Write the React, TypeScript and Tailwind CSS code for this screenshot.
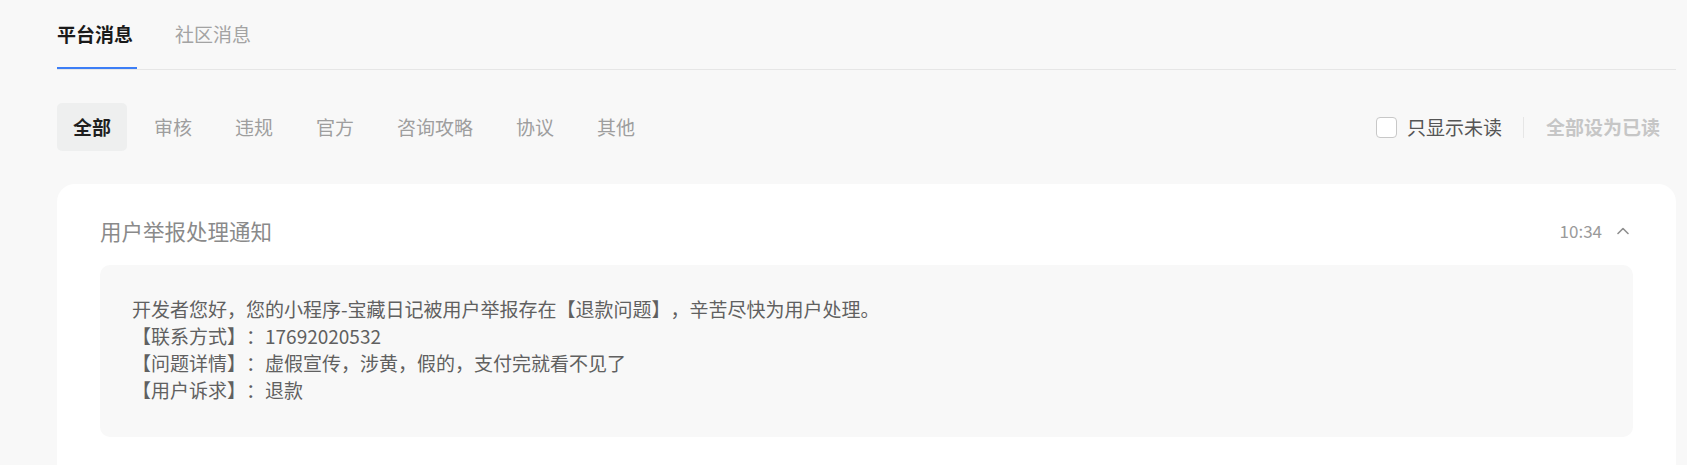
import React from "react";

const FONT = { fontFamily: '"Noto Sans CJK SC", "Noto Sans", sans-serif' };

export default function App() {
  const subTabs = ["全部", "审核", "违规", "官方", "咨询攻略", "协议", "其他"];
  return (
    <div
      className="min-h-screen bg-[#f8f8f8] pl-[57px] pr-[11px] pb-[40px] [text-spacing-trim:space-all]"
      style={FONT}
    >
      {/* top tabs */}
      <div className="flex border-b border-[#e6e6e6]">
        <div className="relative flex h-[69px] w-[80px] items-center text-[19px] font-bold text-[#1a1a1a]">
          平台消息
          <div className="absolute bottom-0 left-0 h-[2px] w-full bg-[#3d7ef6]" />
        </div>
        <div className="ml-[38px] flex h-[69px] items-center text-[19px] text-[#a3a3a3]">
          社区消息
        </div>
      </div>

      {/* sub tabs */}
      <div className="mt-[33px] flex items-center justify-between">
        <div className="flex items-center gap-[11px]">
          {subTabs.map((t, i) => (
            <div
              key={t}
              className={
                i === 0
                  ? "flex h-[48px] items-center rounded-[5px] bg-[#eeefef] px-[16px] text-[19px] font-bold text-[#1f1f1f]"
                  : "flex h-[48px] items-center px-[16px] text-[19px] text-[#9e9e9e]"
              }
            >
              {t}
            </div>
          ))}
        </div>
        <div className="flex items-center pr-[16px]">
          <div className="h-[21px] w-[21px] rounded-[4px] border border-[#c8c8c8] bg-white" />
          <span className="ml-[10px] text-[19px] text-[#555555]">只显示未读</span>
          <div className="ml-[21px] h-[21px] w-px bg-[#e6e6e6]" />
          <span className="ml-[22px] text-[19px] font-bold text-[#c6c6c6]">全部设为已读</span>
        </div>
      </div>

      {/* card */}
      <div className="mt-[33px] rounded-[18px] bg-white px-[43px] pt-[32px] pb-[60px]">
        <div className="flex h-[30px] items-center justify-between">
          <div className="text-[21.5px] text-[#8a8a8a]">用户举报处理通知</div>
          <div className="flex items-center">
            <span className="text-[17px] text-[#9a9a9a]">10:34</span>
            <svg
              className="ml-[15px] mr-[4px]"
              width="12"
              height="8"
              viewBox="0 0 12 8"
              fill="none"
            >
              <path
                d="M1 6.5L6 1.5L11 6.5"
                stroke="#8f8f8f"
                strokeWidth="1.6"
                strokeLinecap="round"
                strokeLinejoin="round"
              />
            </svg>
          </div>
        </div>
        <div className="mt-[19px] rounded-[10px] bg-[#f8f8f8] px-[32px] pt-[30px] pb-[34px] text-[19px] leading-[27px] text-[#606060]">
          <div>开发者您好，您的小程序-宝藏日记被用户举报存在【退款问题】，辛苦尽快为用户处理。</div>
          <div>【联系方式】：17692020532</div>
          <div>【问题详情】：虚假宣传，涉黄，假的，支付完就看不见了</div>
          <div>【用户诉求】：退款</div>
        </div>
      </div>
    </div>
  );
}
